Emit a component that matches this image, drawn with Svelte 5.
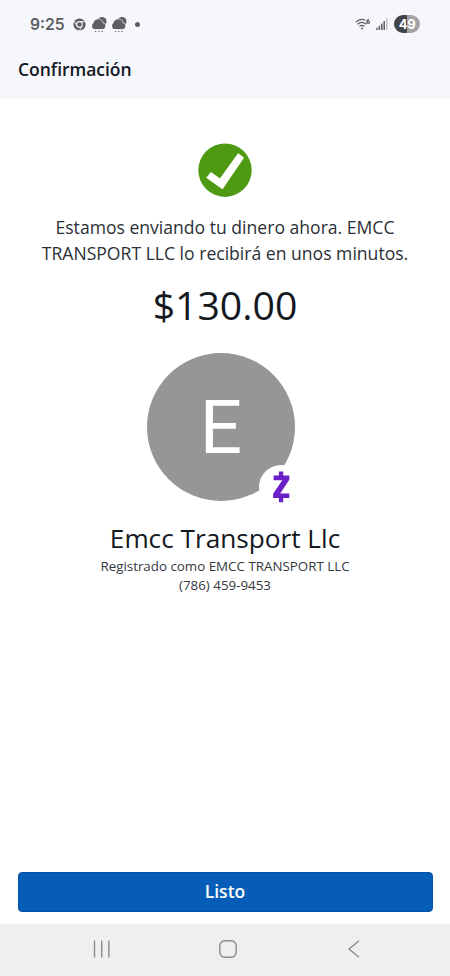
<script>
  let time = "9:25";
  let battery = 49;

  let payment = $state({
    amount: 130,
    name: "Emcc Transport Llc",
    registeredAs: "EMCC TRANSPORT LLC",
    phone: "(786) 459-9453",
  });

  let initial = $derived(payment.name[0]);
</script>

{#snippet rainCloud()}
  <svg class="cloud" width="15" height="17" viewBox="0 0 15 17">
    <circle cx="10" cy="5.5" r="4.5" />
    <circle class="halo" cx="6.2" cy="7.9" r="5" />
    <circle class="halo" cx="10.2" cy="10" r="3.4" />
    <circle cx="6.2" cy="7.9" r="4.7" />
    <circle cx="3.3" cy="9.9" r="3.2" />
    <circle cx="10.2" cy="10" r="3.1" />
    <rect x="3.3" y="9" width="6.9" height="4.1" />
    <path class="drops" d="M3 15.5h1.2M6.2 15.5h1.2M9.4 15.5h1.2" />
  </svg>
{/snippet}

<div class="screen">
  <header>
    <div class="status">
      <span class="time">{time}</span>
      <svg class="chrome" width="13" height="13" viewBox="0 0 13 13">
        <circle cx="6.5" cy="6.5" r="6.1" fill="#5d5e62" />
        <circle cx="6.5" cy="6.5" r="2.9" fill="none" stroke="#f5f7fc" stroke-width="1.1" />
        <path d="M6.5 3.6h5.6M4 8 1.2 3.2M9 8l-2.8 4.8" stroke="#f5f7fc" stroke-width=".9" />
      </svg>
      {@render rainCloud()}
      {@render rainCloud()}
      <span class="dot"></span>

      <svg class="wifi" width="16" height="13" viewBox="0 0 16 13">
        <path d="M.8 4.1C3.7 1.3 7.4.9 10.3 2.2M2.5 6.3c2.6-2.3 6.2-2.3 8.8 0M4.5 8.5c1.5-1.3 3.4-1.3 4.9 0" />
        <circle cx="7" cy="10.6" r="1" />
        <path d="M13.8 1c-1.4.6-2 1.8-1.9 3.1" />
        <circle class="ring" cx="13.2" cy="4.2" r="1.3" />
      </svg>
      <svg class="signal" width="12" height="13" viewBox="0 0 12 13">
        <path d="M1 12v-2.2M3.4 12V7.8M5.8 12V5.4M8.2 12V2.9" />
        <path class="off" d="M10.8 12V.6" />
      </svg>
      <span class="battery">{battery}</span>
    </div>
    <h1>Confirmación</h1>
  </header>

  <main>
    <svg class="check" width="54" height="54" viewBox="0 0 54 54">
      <circle cx="27" cy="27.2" r="26.7" fill="#4f9a13" />
      <path
        d="M12.9 29.8 22 36.3 40.2 11 45.2 14.8 24.4 45.4 9.2 34.7z"
        fill="#fff"
        stroke="#fff"
        stroke-width="1.2"
        stroke-linejoin="round"
      />
    </svg>

    <p class="message">
      Estamos enviando tu dinero ahora. EMCC<br />
      TRANSPORT LLC lo recibirá en unos minutos.
    </p>
    <p class="amount">${payment.amount.toFixed(2)}</p>

    <div class="avatar">
      <span>{initial}</span>
      <div class="badge">
        <svg width="18" height="32" viewBox="0 0 18 32">
          <path d="M6.9.6h4.3v5H6.9zM6.9 26h4.3v5.3H6.9z" />
          <path d="M1.6 4.5h15.7v4.2L8.2 22.5h9.1v4.4H1.1v-4.2l9.2-13.5H1.6z" />
        </svg>
      </div>
    </div>

    <h2>{payment.name}</h2>
    <p class="detail">Registrado como {payment.registeredAs}</p>
    <p class="detail phone">{payment.phone}</p>
  </main>

  <footer>
    <button>Listo</button>
  </footer>

  <nav>
    <svg width="18" height="18" viewBox="0 0 18 18">
      <path d="M1.5 .5v17M8.7 .5v17M15.9 .5v17" />
    </svg>
    <svg width="18" height="18" viewBox="0 0 18 18">
      <rect x=".8" y=".8" width="16.4" height="16.4" rx="5" />
    </svg>
    <svg width="18" height="18" viewBox="0 0 18 18">
      <path d="M14 .7 4.1 9l9.9 8.3" />
    </svg>
  </nav>
</div>

<style>
  :global(body) {
    background: #fff;
  }

  .screen {
    display: flex;
    flex-direction: column;
    width: 450px;
    height: 976px;
    font-family: "Open Sans", "Noto Sans", sans-serif;
    color: #14181f;
    overflow: hidden;
  }

  h1, h2, p {
    margin: 0;
    white-space: nowrap;
  }

  header {
    box-sizing: border-box;
    height: 99px;
    padding: 14px 18px 0;
    background: #f5f7fc;
  }

  .status {
    display: flex;
    align-items: center;
    height: 20px;
    padding: 0 12px;
  }

  .time {
    width: 42.5px;
    padding-top: 2px;
    font: 600 15.7px/20px Inter, Roboto, sans-serif;
    color: #5d5e62;
  }

  .cloud {
    margin-left: 4.5px;
    fill: #5d5e62;
  }

  .chrome + .cloud {
    margin-left: 6.5px;
  }

  .cloud .halo {
    fill: #f5f7fc;
    stroke: #f5f7fc;
    stroke-width: 0.6;
  }

  .cloud .drops {
    stroke: #5d5e62;
    stroke-width: 1.2;
  }

  .dot {
    width: 5px;
    height: 5px;
    margin-left: 8.5px;
    border-radius: 50%;
    background: #5d5e62;
  }

  .wifi {
    margin-left: auto;
    fill: #5d5e62;
  }

  .wifi path,
  .wifi .ring {
    fill: none;
    stroke: #5d5e62;
    stroke-width: 1.2;
  }

  .signal {
    margin: 0 6px 0 5px;
    fill: none;
    stroke: #5d5e62;
    stroke-width: 1.5;
  }

  .signal .off {
    stroke: #c2c3c7;
  }

  .battery {
    width: 26px;
    height: 18px;
    border-radius: 9px;
    background: linear-gradient(90deg, #434448 49%, #a2a3a6 49%);
    color: #fff;
    font: 700 13px/18px Inter, Roboto, sans-serif;
    letter-spacing: -0.4px;
    text-align: center;
  }

  h1 {
    margin-top: 23px;
    font-size: 17.5px;
    line-height: 24px;
    font-weight: 600;
    letter-spacing: -0.02px;
  }

  main {
    flex: 1;
    display: flex;
    flex-direction: column;
    align-items: center;
    padding-top: 44px;
    text-align: center;
  }

  .message {
    margin-top: 17px;
    font-size: 17.58px;
    line-height: 26.4px;
    color: #2b2f36;
  }

  .amount {
    margin-top: 11px;
    font-size: 39.2px;
    line-height: 54px;
  }

  .avatar {
    position: relative;
    width: 148px;
    height: 148px;
    margin: 21px 8px 0 0;
    border-radius: 50%;
    background: #969696;
    color: #fff;
    font: 400 74.5px/150px Roboto, sans-serif;
  }

  .badge {
    position: absolute;
    right: -8px;
    bottom: -8px;
    display: flex;
    align-items: center;
    justify-content: center;
    width: 44px;
    height: 44px;
    border-radius: 50%;
    background: #fff;
  }

  .badge svg {
    fill: #6a1fc8;
  }

  h2 {
    margin-top: 19px;
    font-size: 26.2px;
    line-height: 36px;
    font-weight: 400;
  }

  .detail {
    margin-top: 1px;
    font-size: 13.35px;
    line-height: 19px;
    color: #34383f;
  }

  .phone {
    margin-top: 0;
  }

  footer {
    padding: 0 17.5px 12px;
  }

  button {
    display: block;
    width: 100%;
    height: 40px;
    padding: 0 0 2px;
    border: 1px solid #0752a8;
    border-radius: 4px;
    background: #055db8;
    color: #fff;
    font: 600 17.5px/24px "Open Sans", sans-serif;
  }

  nav {
    display: flex;
    align-items: center;
    justify-content: center;
    gap: 108px;
    height: 52px;
    padding: 0 0 2px 5px;
    box-sizing: border-box;
    background: #efeff1;
  }

  nav svg {
    fill: none;
    stroke: #8b8b8e;
    stroke-width: 1.4;
  }
</style>
